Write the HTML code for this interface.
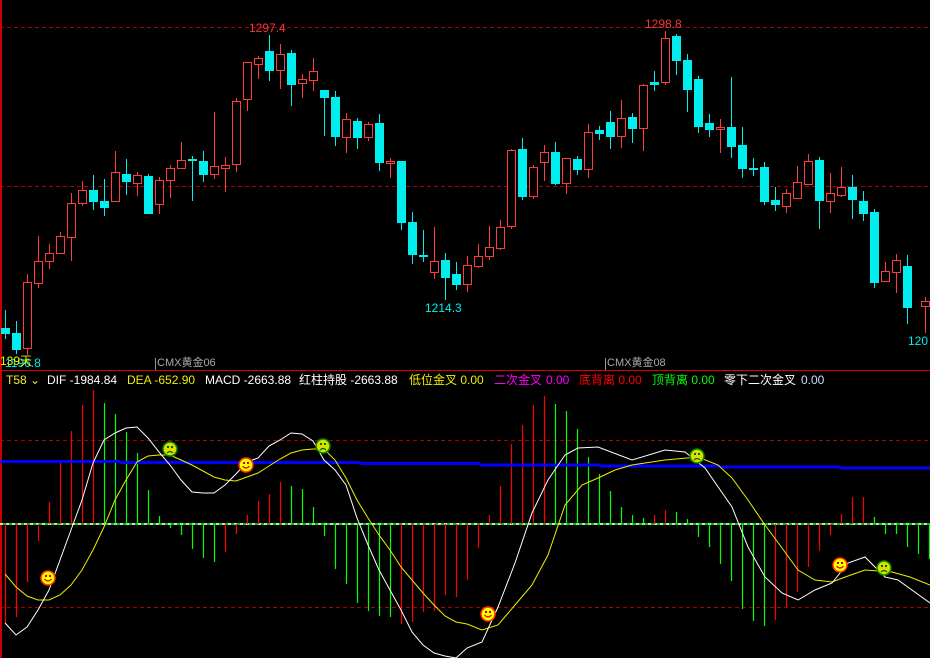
<!DOCTYPE html>
<html><head><meta charset="utf-8"><style>
html,body{margin:0;padding:0;background:#000;width:930px;height:658px;overflow:hidden}
svg{position:absolute;left:0;top:0}
.t{font-family:"Liberation Sans","Noto Sans CJK SC",sans-serif;font-size:12px}
</style></head><body>
<svg id="s" width="930" height="658" xmlns="http://www.w3.org/2000/svg">
<rect width="930" height="658" fill="#000"/>
<line x1="1" y1="0" x2="1" y2="658" stroke="#c00" stroke-width="2"/>
<line x1="0" y1="27.5" x2="930" y2="27.5" stroke="#a00" stroke-dasharray="4,3"/>
<line x1="0" y1="186.5" x2="930" y2="186.5" stroke="#a00" stroke-dasharray="4,3"/>
<line x1="0" y1="370.5" x2="930" y2="370.5" stroke="#d00" stroke-width="1"/>
<line x1="0" y1="440.5" x2="930" y2="440.5" stroke="#a00" stroke-dasharray="4,3"/>
<line x1="0" y1="607.5" x2="930" y2="607.5" stroke="#a00" stroke-dasharray="4,3"/>
<line x1="0" y1="524" x2="930" y2="524" stroke="#0f0" stroke-width="1.5"/>
<line x1="0" y1="524" x2="930" y2="524" stroke="#fff" stroke-width="1.5" stroke-dasharray="3,3"/>
<g id="c"></g><g id="h"></g>
<g fill="none" stroke="#0000ff" stroke-width="3">
<line x1="0" y1="461.5" x2="120" y2="461.5"/><line x1="120" y1="462.5" x2="360" y2="462.5"/><line x1="360" y1="463.5" x2="480" y2="463.5"/><line x1="480" y1="465" x2="600" y2="465"/><line x1="600" y1="466" x2="720" y2="466"/><line x1="720" y1="467" x2="840" y2="467"/><line x1="840" y1="468" x2="930" y2="468"/>
</g>
<polyline fill="none" stroke="#ee0" stroke-width="1" points="5,574 16,587 27,596 38,600 49,600 60,595 71,585 82,570 93,550 104,527 115,500 126,480 137,462 148,456 159,455 170,455 181,460 192,465 203,471 214,477 225,480 236,481 247,477 258,473 269,466 280,459 291,453 302,450 313,449 324,449 335,460 346,478 357,500 368,518 379,535 390,550 401,567 412,580 423,593 434,605 445,616 456,622 467,624 482,630 498,625 515,605 532,585 548,555 565,505 582,485 598,478 615,470 632,465 665,460 698,457 718,465 732,478 748,500 765,525 782,548 798,570 815,580 832,582 848,576 865,570 892,572 910,577 930,585"/>
<polyline fill="none" stroke="#fff" stroke-width="1" points="5,623 16,635 27,627 38,610 49,590 60,560 71,530 82,500 93,463 104,440 115,433 126,428 137,427 148,438 159,452 170,465 181,480 192,492 203,493 214,493 225,485 236,474 247,462 258,458 269,446 280,440 291,433 302,434 313,441 324,460 335,470 346,485 357,518 368,545 379,570 390,590 401,610 412,632 423,645 434,653 445,656 456,658 467,648 482,642 498,607 515,563 532,513 548,480 565,455 578,448 598,447 632,460 665,450 685,452 705,468 732,507 748,547 765,577 782,593 798,600 815,590 832,583 848,563 865,557 885,577 898,580 930,603"/>
<g id="sm"></g>
<text class="t" x="249" y="32" fill="#f33">1297.4</text>
<text class="t" x="645" y="28" fill="#f33">1298.8</text>
<text class="t" x="425" y="312" fill="#0ee">1214.3</text>
<text class="t" x="908" y="345" fill="#0ee">120</text>
<text class="t" x="5" y="367" fill="#0ee">1196.8</text>
<text class="t" x="0" y="365" fill="#ee0">139天</text>
<line x1="155.5" y1="358" x2="155.5" y2="370" stroke="#999"/>
<text class="t" x="157" y="366" fill="#aaa" style="font-size:11px">CMX黄金06</text>
<line x1="605.5" y1="358" x2="605.5" y2="370" stroke="#999"/>
<text class="t" x="607" y="366" fill="#aaa" style="font-size:11px">CMX黄金08</text>
<text class="t" y="384"><tspan x="6" fill="#ee3">T58</tspan><tspan x="30" fill="#ee3">⌄</tspan><tspan x="47" fill="#fff">DIF -1984.84</tspan><tspan x="127" fill="#ee0">DEA -652.90</tspan><tspan x="205" fill="#fff">MACD -2663.88</tspan><tspan x="299" fill="#fff">红柱持股 -2663.88</tspan><tspan x="409" fill="#ee0">低位金叉 0.00</tspan><tspan x="494" fill="#f0f">二次金叉</tspan><tspan x="546" fill="#f0f">0.00</tspan><tspan x="579" fill="#f00">底背离 0.00</tspan><tspan x="652" fill="#0f0">顶背离 0.00</tspan><tspan x="724" fill="#fff">零下二次金叉</tspan><tspan x="801" fill="#cdf">0.00</tspan></text>
</svg>
<script>
var NS="http://www.w3.org/2000/svg";
function el(p,n,a){var e=document.createElementNS(NS,n);for(var k in a)e.setAttribute(k,a[k]);p.appendChild(e);return e;}
var c=document.getElementById("c");
// x, bodyTop, bodyBot, wickTop, wickBot, up(1 red)/0 cyan
var C=[[5,328,334,310,339,0],[16,333,350,321,354,0],[27,282,348,274,355,1],[38,261,283,236,288,1],[49,253,261,244,269,1],[60,236,253,232,254,1],[71,203,237,193,261,1],[82,190,203,181,206,1],[93,190,202,175,210,0],[104,201,208,179,216,0],[115,172,201,151,201,1],[126,174,182,159,195,0],[137,175,183,172,196,1],[148,176,214,174,214,0],[159,180,204,177,214,1],[170,168,180,165,198,1],[181,160,168,142,169,1],[192,159,161,156,201,0],[203,161,175,151,182,0],[214,166,174,112,179,1],[225,165,168,157,192,1],[236,101,164,98,172,1],[247,62,99,62,111,1],[258,58,64,56,79,1],[269,51,71,35,81,0],[280,54,70,44,89,1],[291,53,85,50,106,0],[302,79,83,74,98,1],[313,71,80,58,91,1],[324,90,98,90,136,0],[335,97,137,91,146,0],[346,119,137,113,153,1],[357,121,138,118,149,0],[368,124,137,122,141,1],[379,123,163,114,171,0],[390,161,163,158,178,1],[401,161,223,161,230,0],[412,222,255,212,264,0],[423,255,256,230,262,0],[434,261,272,227,279,1],[445,260,278,253,300,0],[456,274,285,262,290,0],[467,265,284,256,292,1],[478,256,266,244,268,1],[489,247,256,226,260,1],[500,227,248,220,250,1],[511,150,226,149,229,1],[522,149,197,138,200,0],[533,167,196,165,199,1],[544,152,162,145,181,1],[555,152,184,142,185,0],[566,158,183,158,194,1],[577,159,170,156,175,0],[588,132,169,124,178,1],[599,130,134,126,140,0],[610,122,137,111,149,0],[621,118,136,100,148,1],[632,117,129,113,143,0],[643,85,128,84,151,1],[654,82,85,71,91,0],[665,38,82,31,85,1],[676,36,61,34,75,0],[687,60,90,54,112,0],[698,79,127,76,133,0],[709,123,130,114,137,0],[720,127,129,119,153,1],[731,127,147,77,158,0],[742,145,169,127,178,0],[753,168,170,158,176,0],[764,167,202,162,205,0],[775,200,205,187,211,0],[786,193,206,189,213,1],[797,182,198,166,198,1],[808,161,184,154,185,1],[819,160,201,157,229,0],[830,193,201,173,213,1],[841,187,195,167,197,1],[852,187,200,175,219,0],[863,201,214,191,221,0],[874,212,283,209,288,0],[885,271,281,262,282,1],[896,260,272,254,293,1],[907,266,308,255,324,0],[925,301,306,297,333,1]];
C.forEach(function(d){var x=d[0],col=d[5]?"#ff3c3c":"#00eeee";
el(c,"line",{x1:x+.5,y1:d[3],x2:x+.5,y2:d[4],stroke:col});
if(d[5]){el(c,"line",{x1:x+.5,y1:d[3],x2:x+.5,y2:d[1],stroke:col});el(c,"rect",{x:x-3.5,y:d[1]+.5,width:8,height:Math.max(d[2]-d[1],1),fill:"#000",stroke:col});el(c,"line",{x1:x+.5,y1:d[2]+.5,x2:x+.5,y2:d[4],stroke:col});}
else el(c,"rect",{x:x-4,y:d[1],width:9,height:Math.max(d[2]-d[1],2),fill:col});});
var h=document.getElementById("h");
var H=[[5,623,1],[16,617,1],[27,582,1],[38,541,1],[49,502,1],[60,463,1],[71,431,1],[82,405,1],[93,390,1],[104,403,0],[115,414,0],[126,432,0],[137,453,0],[148,490,0],[159,516,0],[170,528,0],[181,535,0],[192,549,0],[203,558,0],[214,562,0],[225,552,1],[236,534,1],[247,515,1],[258,501,1],[269,494,1],[280,482,1],[291,486,0],[302,489,0],[313,507,0],[324,536,0],[335,569,0],[346,584,0],[357,603,0],[368,611,0],[379,616,0],[390,617,0],[401,624,1],[412,622,1],[423,612,1],[434,611,1],[445,595,1],[456,597,1],[467,580,1],[478,548,1],[489,515,1],[500,486,1],[511,444,1],[522,425,1],[533,405,1],[544,396,1],[555,404,0],[566,411,0],[577,429,0],[588,457,0],[599,474,0],[610,491,0],[621,507,0],[632,515,0],[643,518,0],[654,515,1],[665,510,1],[676,512,0],[687,519,0],[698,537,0],[709,547,0],[720,564,0],[731,581,0],[742,609,0],[753,621,0],[764,626,0],[775,620,1],[786,607,1],[797,592,1],[808,567,1],[819,551,1],[830,535,1],[841,514,1],[852,497,1],[863,497,1],[874,517,0],[885,534,0],[896,534,0],[907,547,0],[918,554,0],[929,559,0]];
H.forEach(function(d){el(h,"line",{x1:d[0]+.5,y1:524,x2:d[0]+.5,y2:d[1],stroke:d[2]?"#f00":"#0f0","stroke-width":1.2});});
var sm=document.getElementById("sm");
[[48,578,1],[170,449,0],[246,465,1],[323,446,0],[488,614,1],[697,456,0],[840,565,1],[884,568,0]].forEach(function(d){var x=d[0],y=d[1];
el(sm,"circle",{cx:x,cy:y,r:7,fill:d[2]?"#ff0":"#dd0",stroke:d[2]?"#f30":"#080","stroke-width":1.5});
el(sm,"rect",{x:x-3,y:y-3,width:2,height:2,fill:d[2]?"#c00":"#060"});el(sm,"rect",{x:x+1,y:y-3,width:2,height:2,fill:d[2]?"#c00":"#060"});
el(sm,"path",{d:d[2]?"M"+(x-3.5)+" "+(y+1)+"q3.5 4 7 0":"M"+(x-3)+" "+(y+4)+"q3 -3 6 0",fill:"none",stroke:d[2]?"#c00":"#060","stroke-width":1.2});});
</script>
</body></html>
